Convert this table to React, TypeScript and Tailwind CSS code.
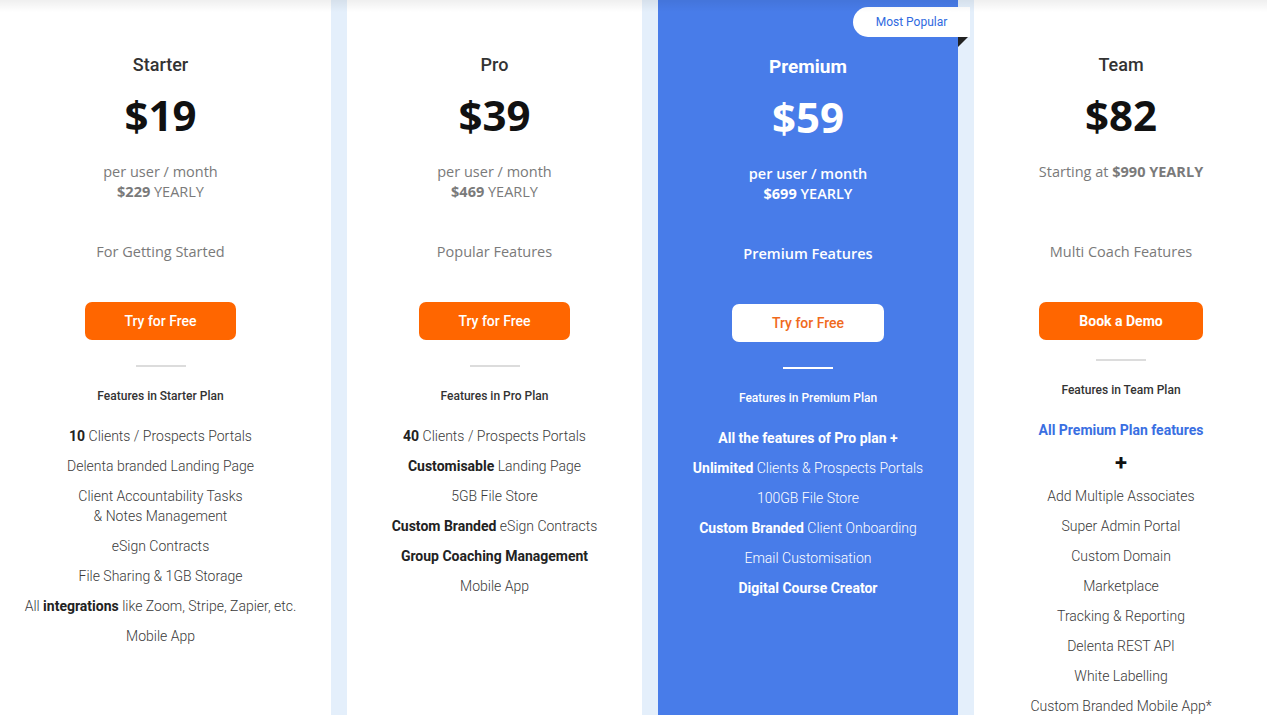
import React from "react";

type Feature = { bold?: string; text?: string };

interface Plan {
  name: string;
  price: string;
  line1: React.ReactNode;
  line2?: React.ReactNode;
  tagline: string;
  cta: string;
  ctaWidth: string;
  featuresTitle: string;
  features: Feature[][];
  highlight?: boolean;
  team?: boolean;
}

const sans = { fontFamily: "Roboto, 'Liberation Sans', sans-serif" };
const geo = { fontFamily: "'Open Sans', 'DejaVu Sans', sans-serif" };

const plans: Plan[] = [
  {
    name: "Starter",
    price: "$19",
    line1: "per user / month",
    line2: (
      <>
        <b className="font-bold">$229</b> YEARLY
      </>
    ),
    tagline: "For Getting Started",
    cta: "Try for Free",
    ctaWidth: "w-[151px]",
    featuresTitle: "Features in Starter Plan",
    features: [
      [{ bold: "10", text: " Clients /  Prospects Portals" }],
      [{ text: "Delenta branded Landing Page" }],
      [{ text: "Client Accountability Tasks" }, { text: "& Notes Management" }],
      [{ text: "eSign Contracts" }],
      [{ text: "File Sharing & 1GB Storage" }],
      [{ text: "All " }, { bold: "integrations", text: " like Zoom, Stripe, Zapier, etc." }],
      [{ text: "Mobile App" }],
    ],
  },
  {
    name: "Pro",
    price: "$39",
    line1: "per user / month",
    line2: (
      <>
        <b className="font-bold">$469</b> YEARLY
      </>
    ),
    tagline: "Popular Features",
    cta: "Try for Free",
    ctaWidth: "w-[151px]",
    featuresTitle: "Features in Pro Plan",
    features: [
      [{ bold: "40", text: " Clients / Prospects Portals" }],
      [{ bold: "Customisable", text: " Landing Page" }],
      [{ text: "5GB File Store" }],
      [{ bold: "Custom Branded", text: " eSign Contracts" }],
      [{ bold: "Group Coaching Management" }],
      [{ text: "Mobile App" }],
    ],
  },
  {
    name: "Premium",
    price: "$59",
    line1: "per user / month",
    line2: (
      <>
        <b className="font-bold">$699</b> YEARLY
      </>
    ),
    tagline: "Premium Features",
    cta: "Try for Free",
    ctaWidth: "w-[152px]",
    featuresTitle: "Features in Premium Plan",
    highlight: true,
    features: [
      [{ bold: "All the features of Pro plan +" }],
      [{ bold: "Unlimited", text: " Clients & Prospects Portals" }],
      [{ text: "100GB File Store" }],
      [{ bold: "Custom Branded", text: " Client Onboarding" }],
      [{ text: "Email Customisation" }],
      [{ bold: "Digital Course Creator" }],
    ],
  },
  {
    name: "Team",
    price: "$82",
    line1: (
      <>
        Starting at <b className="font-bold">$990 YEARLY</b>
      </>
    ),
    tagline: "Multi Coach Features",
    cta: "Book a Demo",
    ctaWidth: "w-[164px]",
    featuresTitle: "Features in Team Plan",
    team: true,
    features: [
      [{ text: "Add Multiple Associates" }],
      [{ text: "Super Admin Portal" }],
      [{ text: "Custom Domain" }],
      [{ text: "Marketplace" }],
      [{ text: "Tracking & Reporting" }],
      [{ text: "Delenta REST API" }],
      [{ text: "White Labelling" }],
      [{ text: "Custom Branded Mobile App*" }],
    ],
  },
];

function FeatureRow({ parts, hl }: { parts: Feature[]; hl?: boolean }) {
  // two-line items are stacked, others are inline pieces
  const stacked = parts.length > 1 && !parts.some((p) => p.bold);
  return (
    <li
      className={`text-[14px] leading-[20px] font-light ${
        hl ? "text-white" : "text-[#3a3a3a]"
      }`}
    >
      {stacked
        ? parts.map((p, i) => <div key={i}>{p.text}</div>)
        : parts.map((p, i) => (
            <React.Fragment key={i}>
              {p.bold && (
                <b className={`font-bold ${hl ? "text-white" : "text-[#222]"}`}>{p.bold}</b>
              )}
              {p.text}
            </React.Fragment>
          ))}
    </li>
  );
}

function PlanColumn({ plan, width }: { plan: Plan; width: string }) {
  const hl = plan.highlight;
  return (
    <div
      className={`relative flex flex-col items-center text-center ${width} ${
        hl ? "bg-[#487ce9] pt-[55px]" : "bg-white pt-[53px]"
      }`}
      style={sans}
    >
      {hl && (
        <>
          <div className="absolute right-[-12px] top-[7px] flex h-[30px] w-[117px] items-center justify-center rounded-l-full bg-white text-[12px] text-[#2f6ae0]">
            Most Popular
          </div>
          <svg className="absolute right-[-10px] top-[37px]" width="10" height="10" viewBox="0 0 10 10">
            <polygon points="0,0 10,0 0,10" fill="#222" />
          </svg>
        </>
      )}
      <h3
        className={`h-[24px] leading-[24px] ${
          hl ? "text-[19px] font-bold text-white" : "text-[18px] font-medium text-[#333]"
        }`}
      >
        {plan.name}
      </h3>
      <div
        className={`mt-[12px] h-[52px] text-[42px] leading-[52px] font-bold ${
          hl ? "text-white" : "text-[#111]"
        }`}
        style={geo}
      >
        {plan.price}
      </div>
      <div
        className={`mt-[21px] h-[40px] text-[14.5px] leading-[20px] ${
          hl ? "font-semibold text-white" : "text-[#7a7a7a]"
        }`}
        style={geo}
      >
        <div>{plan.line1}</div>
        {plan.line2 && <div>{plan.line2}</div>}
      </div>
      <div
        className={`mt-[40px] text-[14.5px] leading-[20px] ${
          hl ? "font-semibold text-white" : "text-[#7a7a7a]"
        }`}
        style={geo}
      >
        {plan.tagline}
      </div>
      <button
        className={`mt-[40px] h-[38px] ${plan.ctaWidth} rounded-[7px] text-[14px] ${
          hl
            ? "bg-white font-medium text-[#f06a1c]"
            : plan.team
            ? "bg-[#ff6600] font-bold text-white"
            : "bg-[#ff6600] font-medium text-white"
        }`}
      >
        {plan.cta}
      </button>
      <div
        className={`h-[2px] w-[50px] ${plan.team ? "mt-[19px]" : "mt-[25px]"} ${
          hl ? "bg-white" : "bg-[#dcdcdc]"
        }`}
      />
      <div
        className={`mt-[21px] text-[12px] leading-[16px] font-medium ${
          hl ? "font-bold text-white" : "text-[#333]"
        }`}
      >
        {plan.featuresTitle}
      </div>
      {plan.team && (
        <>
          <div className="mt-[22px] text-[14px] leading-[20px] font-bold text-[#3a6fe2]">
            All Premium Plan features
          </div>
          <div className="mt-[12px] text-[22px] leading-[22px] font-bold text-[#111]">+</div>
        </>
      )}
      <ul className={`flex flex-col gap-[10px] ${plan.team ? "mt-[12px]" : "mt-[22px]"} pb-[20px]`}>
        {plan.features.map((f, i) => (
          <FeatureRow key={i} parts={f} hl={hl} />
        ))}
      </ul>
    </div>
  );
}

export default function App() {
  const widths = ["w-[331px] pr-[10px]", "w-[295px]", "w-[300px]", "flex-1 pl-[1px]"];
  return (
    <div className="relative min-h-[715px] bg-white">
      <div className="flex min-h-[715px] gap-[16px] bg-[#e4effb]">
        {plans.map((p, i) => (
          <PlanColumn key={p.name} plan={p} width={widths[i]} />
        ))}
      </div>
      <div className="pointer-events-none absolute inset-x-0 top-0 h-[12px] bg-gradient-to-b from-[#00000010] to-transparent" />
    </div>
  );
}
